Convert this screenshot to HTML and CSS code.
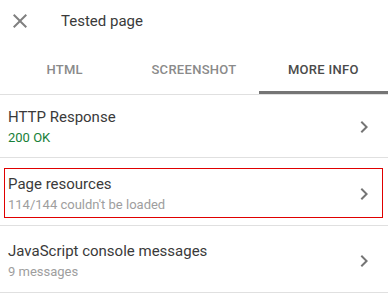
FILE: index.html
```html
<!DOCTYPE html>
<html lang="en">
<head>
    <meta charset="UTF-8">
    <meta name="viewport" content="width=device-width, initial-scale=1.0">
    <title>Tested page</title>
    <link rel="stylesheet" href="styles.css">
</head>
<body>
    <div class="header">
        <svg class="close" viewBox="0 0 24 24" width="24" height="24">
            <path d="M19 6.41L17.59 5 12 10.59 6.41 5 5 6.41 10.59 12 5 17.59 6.41 19 12 13.41 17.59 19 19 17.59 13.41 12z"/>
        </svg>
        <span class="title">Tested page</span>
    </div>

    <div class="tabs">
        <div class="tab">HTML</div>
        <div class="tab">SCREENSHOT</div>
        <div class="tab active">MORE INFO</div>
    </div>

    <div class="list">
        <div class="row">
            <div class="row-text">
                <div class="row-title">HTTP Response</div>
                <div class="row-sub ok">200 OK</div>
            </div>
            <svg class="chevron" viewBox="0 0 24 24" width="24" height="24">
                <path d="M10 6L8.59 7.41 13.17 12l-4.58 4.59L10 18l6-6z"/>
            </svg>
        </div>
        <!-- fila marcada con el recuadro rojo -->
        <div class="row row-marked">
            <div class="marked-box">
                <div class="row-text">
                    <div class="row-title">Page resources</div>
                    <div class="row-sub">114/144 couldn't be loaded</div>
                </div>
                <svg class="chevron" viewBox="0 0 24 24" width="24" height="24">
                    <path d="M10 6L8.59 7.41 13.17 12l-4.58 4.59L10 18l6-6z"/>
                </svg>
            </div>
        </div>
        <div class="row">
            <div class="row-text">
                <div class="row-title">JavaScript console messages</div>
                <div class="row-sub">9 messages</div>
            </div>
            <svg class="chevron" viewBox="0 0 24 24" width="24" height="24">
                <path d="M10 6L8.59 7.41 13.17 12l-4.58 4.59L10 18l6-6z"/>
            </svg>
        </div>
    </div>
</body>
</html>
```

FILE: styles.css
```css
body {
    font-family: Roboto, "Liberation Sans", Arial, sans-serif;
    background-color: #fff;
    color: #3a3a3a;
    margin: 0;
}
.header {
    display: flex;
    align-items: center;
    height: 24px;
    padding: 9px 0 0 8px;
}
.close {
    fill: #808080;
    margin-right: 29px;
}
.title {
    font-size: 15px;
    line-height: 24px;
    color: #3a3a3a;
}
.tabs {
    display: flex;
    border-bottom: 1px solid #e0e0e0;
}
.tab {
    flex: 1;
    text-align: center;
    font-size: 13px;
    font-weight: 500;
    letter-spacing: 0.3px;
    line-height: 20px;
    padding: 27px 0 14px;
    color: #8a8a8a;
}
.tab.active {
    color: #4a4a4a;
    box-shadow: inset 0 -3px 0 #757575;
}
.row {
    display: flex;
    align-items: center;
    justify-content: space-between;
    padding: 14px 12px 10px 8px;
    border-bottom: 1px solid #e0e0e0;
}
.row:first-child {
    padding-top: 11px;
    padding-bottom: 9px;
}
.row-title {
    font-size: 15px;
    line-height: 22px;
    color: #3a3a3a;
}
.row-sub {
    font-size: 13px;
    line-height: 20px;
    color: #9e9e9e;
}
.row-sub.ok {
    color: #188038;
}
.chevron {
    fill: #757575;
    flex-shrink: 0;
}
/* recuadro rojo alrededor de la fila */
.row-marked {
    padding: 10px 5px 7px 4px;
}
.marked-box {
    flex: 1;
    display: flex;
    align-items: center;
    justify-content: space-between;
    border: 1px solid #e00000;
    padding: 4px 6px 2px 3px;
}
```
